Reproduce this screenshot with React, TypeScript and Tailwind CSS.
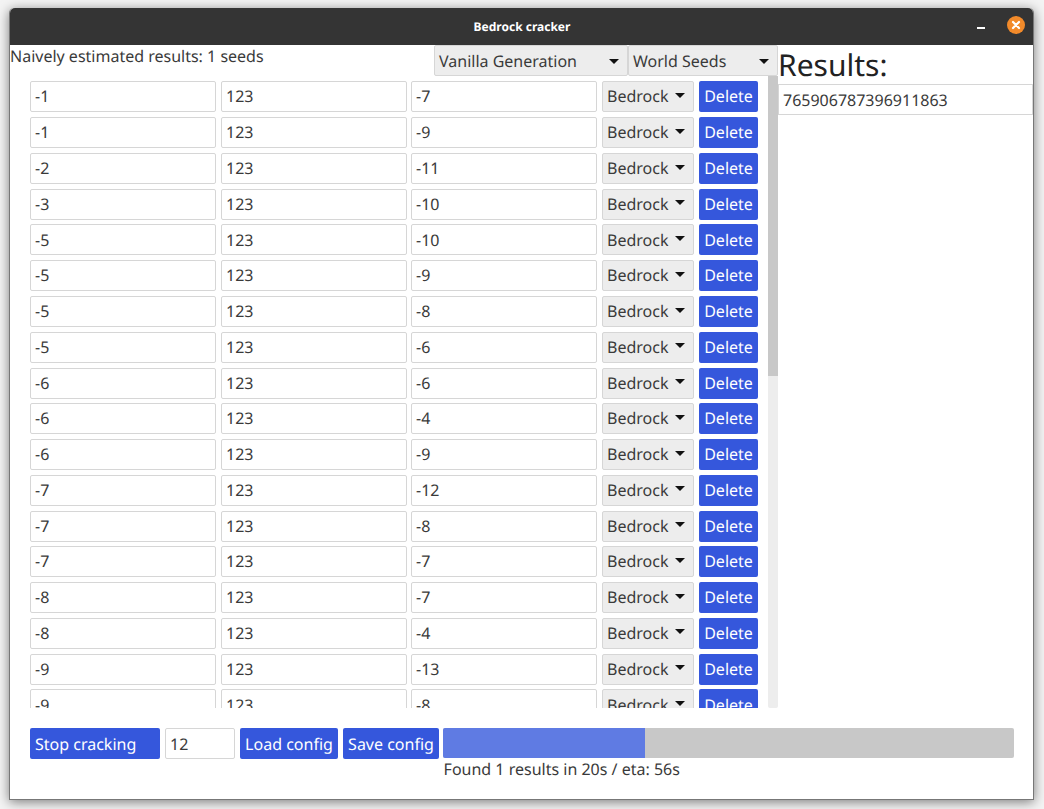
import React from "react";

const rows: [string, string, string][] = [
  ["-1", "123", "-7"],
  ["-1", "123", "-9"],
  ["-2", "123", "-11"],
  ["-3", "123", "-10"],
  ["-5", "123", "-10"],
  ["-5", "123", "-9"],
  ["-5", "123", "-8"],
  ["-5", "123", "-6"],
  ["-6", "123", "-6"],
  ["-6", "123", "-4"],
  ["-6", "123", "-9"],
  ["-7", "123", "-12"],
  ["-7", "123", "-8"],
  ["-7", "123", "-7"],
  ["-8", "123", "-7"],
  ["-8", "123", "-4"],
  ["-9", "123", "-13"],
  ["-9", "123", "-8"],
];

function Caret({ className }: { className: string }) {
  return (
    <svg width="10" height="5" viewBox="0 0 10 5" className={className}>
      <path d="M0 0h10L5 5z" fill="#111" />
    </svg>
  );
}

function Field({ value, className }: { value: string; className: string }) {
  return (
    <div className={`h-[31px] shrink-0 flex items-center px-[4px] bg-white border border-[#d6d6d6] rounded-[2px] text-[#3a3a3a] ${className}`}>
      {value}
    </div>
  );
}

function Btn({ label, className }: { label: string; className: string }) {
  return (
    <div className={`h-[31px] shrink-0 flex items-center bg-[#3557dc] text-white rounded-[2px] whitespace-nowrap ${className}`}>
      {label}
    </div>
  );
}

export default function App() {
  return (
    <div className="h-[809px] w-[1044px] bg-[#f4f4f4] pt-2 pl-[10px] overflow-hidden text-[16px] leading-[22px] [text-rendering:geometricPrecision] font-['Noto_Sans','Open_Sans',sans-serif]">
      <div className="w-[1025px] h-[792px] bg-white flex flex-col border-b border-r border-l border-[#777] rounded-t-[5px] shadow-[0_2px_12px_rgba(0,0,0,0.5)] -ml-px">
        <div className="h-[37px] shrink-0 bg-[#343434] rounded-t-[5px] flex items-center justify-between relative">
          <div className="flex-1 text-center text-white font-bold text-[12px] pl-[1px]">Bedrock cracker</div>
          <div className="absolute right-[8px] top-[8px] flex items-center gap-[22px]">
            <div className="w-2 h-[2px] bg-white mt-[6px]" />
            <div className="w-[18px] h-[18px] rounded-full bg-[#f28a2a] flex items-center justify-center">
              <svg width="10" height="10" viewBox="0 0 10 10">
                <path d="M2 2l6 6M8 2l-6 6" stroke="#fff" strokeWidth="2.2" strokeLinecap="round" />
              </svg>
            </div>
          </div>
        </div>

        <div className="flex h-[663px] shrink-0">
          <div className="w-[768px] shrink-0 flex flex-col">
            <div className="h-[31px] shrink-0 flex justify-between">
              <div className="text-[#3a3a3a]">Naively estimated results: 1 seeds</div>
              <div className="flex">
                <div className="w-[194px] h-[31px] bg-[#ededed] border border-[#d6d6d6] rounded-[2px] flex items-center px-[4px] text-[#3a3a3a] relative">
                  Vanilla Generation
                  <Caret className="absolute right-[8px] top-[13px]" />
                </div>
                <div className="w-[150px] h-[31px] bg-[#ededed] border border-[#d6d6d6] rounded-[2px] flex items-center px-[4px] text-[#3a3a3a] relative">
                  World Seeds
                  <Caret className="absolute right-[8px] top-[13px]" />
                </div>
              </div>
            </div>

            <div className="h-[632px] shrink-0 flex">
              <div className="w-[758px] h-[632px] overflow-hidden pl-[20px] pt-[5.4px] flex flex-col gap-[4.78px]">
                {rows.map((r, i) => (
                  <div key={i} className="flex h-[31px] shrink-0 gap-[5px]">
                    <Field value={r[0]} className="w-[186px] pb-[0.8px]" />
                    <Field value={r[1]} className="w-[186px] pb-[0.8px]" />
                    <Field value={r[2]} className="w-[186px] -ml-[1px] pb-[0.8px]" />
                    <div className="w-[92px] h-[31px] shrink-0 bg-[#ededed] border border-[#d6d6d6] rounded-[2px] flex items-center pl-[4px] pb-[0.8px] gap-[7px] text-[#3a3a3a]">
                      Bedrock
                      <Caret className="mb-[2px]" />
                    </div>
                    <Btn label="Delete" className="w-[59px] justify-center pb-[0.8px]" />
                  </div>
                ))}
              </div>
              <div className="w-[10px] h-[632px] bg-[#ededed] rounded-b-[2px]">
                <div className="w-[10px] h-[300px] bg-[#c8c8c8]" />
              </div>
            </div>
          </div>

          <div className="flex-1 min-w-0 flex flex-col">
            <div className="text-[30px] leading-[39px] text-[#222]">Results:</div>
            <div className="w-[255px] h-[31px] border border-[#d6d6d6] flex items-center px-[4px] text-[#3a3a3a]">
              765906787396911863
            </div>
          </div>
        </div>

        <div className="flex pl-[20px] pt-[20px] gap-[5px]">
          <Btn label="Stop cracking" className="w-[130px] pl-[5px]" />
          <Field value="12" className="w-[70px]" />
          <Btn label="Load config" className="w-[98px] justify-center" />
          <Btn label="Save config" className="w-[96px] justify-center" />
          <div className="w-[571px] -ml-[1px] flex flex-col">
            <div className="h-[30px] bg-[#c8c8c8] rounded-[2px] overflow-hidden">
              <div className="w-[202px] h-[30px] bg-[#5f7be3]" />
            </div>
            <div className="pl-[0.6px] text-[#3a3a3a]">Found 1 results in 20s / eta: 56s</div>
          </div>
        </div>
      </div>
    </div>
  );
}
